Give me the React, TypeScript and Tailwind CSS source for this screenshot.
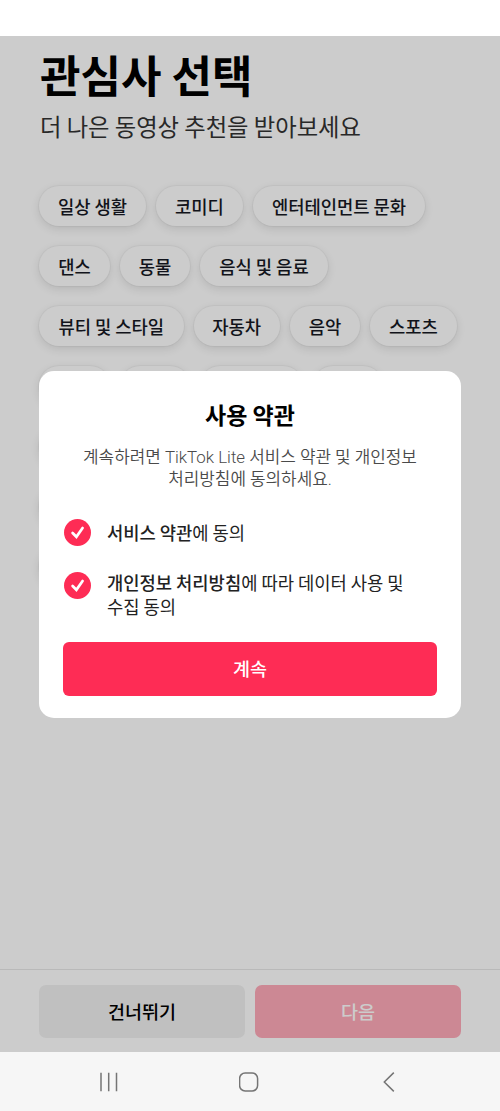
import clsx from "clsx";

type Interest = {
  label: string;
  width: string;
};

type ConsentItem = {
  title: string;
  rest: string;
  multiline?: boolean;
};

const interestRows: Interest[][] = [
  [
    { label: "일상 생활", width: "w-[107px]" },
    { label: "코미디", width: "w-[87px]" },
    { label: "엔터테인먼트 문화", width: "w-[172px]" },
  ],
  [
    { label: "댄스", width: "w-[71px]" },
    { label: "동물", width: "w-[70px]" },
    { label: "음식 및 음료", width: "w-[128px]" },
  ],
  [
    { label: "뷰티 및 스타일", width: "w-[144.5px]" },
    { label: "자동차", width: "w-[86.5px]" },
    { label: "음악", width: "w-[70px]" },
    { label: "스포츠", width: "w-[87px]" },
  ],
  [
    { label: "", width: "w-[71px]" },
    { label: "", width: "w-[70px]" },
    { label: "", width: "w-[103px]" },
    { label: "", width: "w-[70px]" },
  ],
  [{ label: "", width: "w-[145px]" }],
  [{ label: "", width: "w-[145px]" }],
  [{ label: "", width: "w-[145px]" }],
];

const consents: ConsentItem[] = [
  { title: "서비스 약관", rest: "에 동의" },
  {
    title: "개인정보 처리방침",
    rest: "에 따라 데이터 사용 및 수집 동의",
    multiline: true,
  },
];

function InterestChip({ label, width }: Interest) {
  return (
    <button
      type="button"
      className={clsx(
        "flex h-10 shrink-0 items-center justify-center whitespace-nowrap rounded-full bg-white text-[17.7px] font-medium text-[#161823] shadow-[0_0_1px_1px_rgba(0,0,0,0.04),0_3px_10px_rgba(0,0,0,0.11)]",
        width,
      )}
    >
      {label}
    </button>
  );
}

function CheckMark() {
  return (
    <svg viewBox="0 0 27 27" className="size-[27px] shrink-0" fill="none">
      <circle cx="13.5" cy="13.5" r="13.5" fill="#fe2c55" />
      <path
        d="M8.6 14L12.4 17.8L18.6 9"
        stroke="#fff"
        strokeWidth="2.7"
        strokeLinecap="round"
      />
    </svg>
  );
}

function TermsDialog() {
  return (
    <div
      role="dialog"
      className="absolute left-[39px] top-[335px] h-[347px] w-[422px] rounded-[15px] bg-white px-6 pt-[27px]"
    >
      <h2 className="text-center text-[23px] font-bold leading-8 text-black">
        사용 약관
      </h2>
      <div className="mt-4 whitespace-nowrap text-center font-['Roboto','Noto_Sans_CJK_KR',sans-serif] text-[16.9px] font-[350] leading-[22px] text-[#4a4a4a]">
        <p>계속하려면 TikTok Lite 서비스 약관 및 개인정보</p>
        <p>처리방침에 동의하세요.</p>
      </div>

      <div className="mt-[29px] flex flex-col gap-[25px] pl-px">
        {consents.map((item) => (
          <div
            key={item.title}
            className={clsx("flex gap-4", item.multiline ? "items-start pt-px" : "items-center")}
          >
            <CheckMark />
            <p
              className={clsx(
                "w-[310px] break-keep text-[17.7px] leading-[23.5px] text-[#222]",
                item.multiline && "-mt-px",
              )}
            >
              <span className="font-medium">{item.title}</span>
              {item.rest}
            </p>
          </div>
        ))}
      </div>

      <button
        type="button"
        className="mt-6 h-[54px] w-[374px] rounded-[6px] bg-[#fe2c55] text-[18.5px] font-medium text-white"
      >
        계속
      </button>
    </div>
  );
}

function NavigationBar() {
  return (
    <nav className="flex h-[59px] items-center bg-[#f6f6f6] pl-[99px] text-[#757575]">
      <svg width="20" height="20" viewBox="0 0 20 20" stroke="currentColor" strokeWidth="1.5">
        <path d="M2 .8V19.2M9.7 .8V19.2M17.5 .8V19.2" />
      </svg>
      <svg width="20" height="20" viewBox="0 0 20 20" fill="none" stroke="currentColor" strokeWidth="1.5" className="ml-[120px]">
        <rect x=".6" y="1" width="18" height="18" rx="5.5" />
      </svg>
      <svg width="12" height="20" viewBox="0 0 12 20" fill="none" stroke="currentColor" strokeWidth="1.5" className="ml-[124px]">
        <path d="M10.8 .6L1.3 10L10.8 19.4" />
      </svg>
    </nav>
  );
}

export default function App() {
  return (
    <div className="flex h-[1111px] w-[500px] flex-col overflow-hidden bg-white pt-9 font-['Noto_Sans_CJK_KR',sans-serif]">
      <main className="relative flex h-[1016px] flex-col overflow-hidden bg-white">
        <header className="px-10 pt-[10px]">
          <h1 className="text-[44px] font-bold leading-[56px] text-black">
            관심사 선택
          </h1>
          <p className="mt-[6px] text-[23.3px] leading-9 text-[#333]">
            더 나은 동영상 추천을 받아보세요
          </p>
        </header>

        <section className="mt-[42px] flex flex-col gap-5 pl-[39px]">
          {interestRows.map((row, rowIndex) => (
            <div key={rowIndex} className="flex gap-[10px]">
              {row.map((interest, index) => (
                <InterestChip key={index} {...interest} />
              ))}
            </div>
          ))}
        </section>

        <footer className="mt-auto flex h-[83px] gap-[10px] border-t border-[#e8e8e8] px-[39px] pt-[15px]">
          <button
            type="button"
            className="h-[53px] flex-1 rounded-[7px] bg-[#f1f1f1] text-[18.5px] font-medium text-black"
          >
            건너뛰기
          </button>
          <button
            type="button"
            className="h-[53px] flex-1 rounded-[7px] bg-[#ffaab9] text-[18.5px] font-medium text-white"
          >
            다음
          </button>
        </footer>

        <div className="absolute inset-0 bg-black/20" />
        <TermsDialog />
      </main>
      <NavigationBar />
    </div>
  );
}
